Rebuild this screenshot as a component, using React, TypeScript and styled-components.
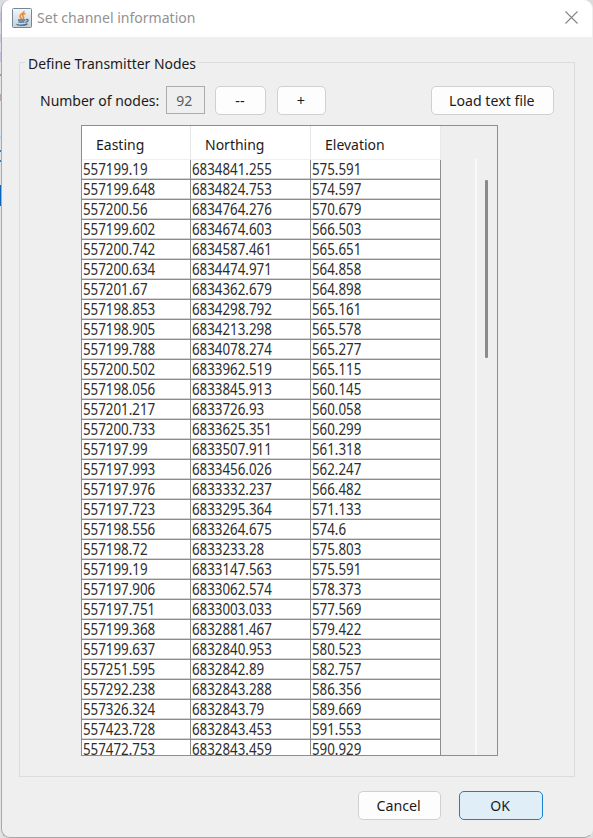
import React from "react";
import styled, { createGlobalStyle } from "styled-components";

const Global = createGlobalStyle`
  *, *::before, *::after { box-sizing: border-box; }
  body { margin: 0; background: #e4e4e6; overflow: hidden; }
`;

const Backdrop = styled.div`
  width: 593px;
  height: 838px;
  padding: 0 0 0 1px;
  background:
    linear-gradient(
      #dcdce4 0 12px, #c9c4dc 12px 22px, #dcdce4 22px 34px, #cfc0d4 34px 42px,
      #dcdce4 42px 52px, #c9c0dc 52px 62px, #e3e3e3 62px 74px, #9a9a9a 74px 76px,
      #e3e3e3 76px 94px, #b8aaa4 94px 101px, #e3e3e3 101px 136px, #b9dcf2 136px 139px,
      #e3e3e3 139px 150px, #3a80c0 150px 152px, #e3e3e3 152px 160px, #3a80c0 160px 162px,
      #e3e3e3 162px 185px, #0a64c0 185px 206px, #e3e3e3 206px
    ) left / 2px 100% no-repeat,
    #dcdcdc;
  font-family: "Noto Sans", sans-serif;
  font-size: 14.5px;
  color: #1b1b1b;
`;

const Window = styled.div`
  width: 592px;
  height: 838px;
  display: flex;
  flex-direction: column;
  background: #efefef;
  border: 1px solid #a9a9a9;
  border-top: 0;
  border-right-color: #efefef;
  border-radius: 9px;
  overflow: hidden;
`;

const TitleBar = styled.header`
  height: 37px;
  flex: none;
  display: flex;
  align-items: center;
  padding: 0 14px 2px 10px;
  background: #fff;
`;

const Title = styled.h1`
  flex: 1;
  margin: 0 0 1px 5px;
  font-size: 15px;
  font-weight: 400;
  line-height: 20px;
  color: #929292;
`;

const Fit = styled.span<{ $x?: number; $origin?: string }>`
  display: inline-block;
  white-space: nowrap;
  transform: scaleX(${(p) => p.$x ?? 0.965});
  transform-origin: ${(p) => p.$origin ?? "left"} center;
`;

const Group = styled.fieldset`
  width: 556px;
  height: 723px;
  margin: 17px 0 0 17px;
  padding: 0;
  border: 1px solid #dcdcdc;
  min-width: 0;
`;

const Legend = styled.legend`
  width: 174px;
  height: 17px;
  margin-left: 5px;
  padding: 0 0 0 3px;
  line-height: 19px;
`;

const Toolbar = styled.div`
  display: flex;
  align-items: center;
  height: 30px;
  margin: 14px 20px 0 19px;
`;

const CountLabel = styled.label`
  width: 127px;
  padding-left: 0.5px;
`;

const CountField = styled.output`
  width: 39px;
  height: 28px;
  border: 1px solid #aaaaaf;
  color: #5a5a5a;
  text-align: center;
  line-height: 26px;
  padding-right: 2px;
`;

const Button = styled.button<{ $w: number; $primary?: boolean }>`
  width: ${(p) => p.$w}px;
  height: 29px;
  padding: 0 1px 1px 0;
  border: 1px solid ${(p) => (p.$primary ? "#1a80d2" : "#d0d0d0")};
  border-radius: 5px;
  background: ${(p) => (p.$primary ? "#e0eef8" : "#fdfdfd")};
  font: inherit;
  color: inherit;
`;

const StepButtons = styled.div`
  display: flex;
  gap: 11px;
  margin-left: 10px;
  flex: 1;
`;

const TableFrame = styled.div`
  width: 417px;
  height: 631px;
  margin: 10px 0 0 61px;
  border: 1px solid #8b8e98;
  display: flex;
  overflow: hidden;
`;

const Table = styled.div`
  width: 359px;
  flex: none;
`;

const HeaderRow = styled.div`
  display: grid;
  grid-template-columns: 109px 120px 130px;
  height: 34px;
  background: #fff;
  border-bottom: 1px solid #f0f0f0;
`;

const HeaderCell = styled.div`
  padding-left: 13.5px;
  border-right: 1px solid #e8e8e8;
  line-height: 36px;
`;

const Row = styled.div`
  display: grid;
  grid-template-columns: 109px 120px 130px;
  height: 20px;
  width: 359px;
  background: #fff;
`;

const Cell = styled.div`
  padding-left: 0.8px;
  border-right: 1px solid #8c8c8c;
  border-bottom: 1px solid #8c8c8c;
  box-shadow: inset 0 -1px #d4d4d4;
  line-height: 19px;
  color: #2c2c2c;
  font-size: 15.5px;
`;

const ScrollTrack = styled.div`
  width: 21px;
  margin: 33px 0 0 34px;
  border-left: 2px solid #fafafa;
  padding: 21px 0 0 8px;
`;

const ScrollThumb = styled.div`
  width: 3px;
  height: 178px;
  border-radius: 1px;
  background: #8b8b8b;
`;

const Actions = styled.footer`
  display: flex;
  justify-content: flex-end;
  gap: 18px;
  margin: 14px 49px 0 0;
`;

const nodes = `557199.19 6834841.255 575.591
557199.648 6834824.753 574.597
557200.56 6834764.276 570.679
557199.602 6834674.603 566.503
557200.742 6834587.461 565.651
557200.634 6834474.971 564.858
557201.67 6834362.679 564.898
557198.853 6834298.792 565.161
557198.905 6834213.298 565.578
557199.788 6834078.274 565.277
557200.502 6833962.519 565.115
557198.056 6833845.913 560.145
557201.217 6833726.93 560.058
557200.733 6833625.351 560.299
557197.99 6833507.911 561.318
557197.993 6833456.026 562.247
557197.976 6833332.237 566.482
557197.723 6833295.364 571.133
557198.556 6833264.675 574.6
557198.72 6833233.28 575.803
557199.19 6833147.563 575.591
557197.906 6833062.574 578.373
557197.751 6833003.033 577.569
557199.368 6832881.467 579.422
557199.637 6832840.953 580.523
557251.595 6832842.89 582.757
557292.238 6832843.288 586.356
557326.324 6832843.79 589.669
557423.728 6832843.453 591.553
557472.753 6832843.459 590.929`
  .split("\n")
  .map((line) => line.split(" "));

function JavaIcon() {
  return (
    <svg width="20" height="20" viewBox="0 0 20 20" fill="none">
      <defs>
        <linearGradient id="tile" x1="0" y1="0" x2="0" y2="1">
          <stop offset="0" stopColor="#f4f7f9" />
          <stop offset="1" stopColor="#c3ced8" />
        </linearGradient>
      </defs>
      <rect x="0.5" y="0.5" width="19" height="19" rx="1" fill="url(#tile)" stroke="#71889c" />
      <path d="M12 3C12.500 5.500 7.500 6 8 8.500C8.200 9.700 9.500 10 9.500 11M13.500 5.500C10.500 6.500 10 7.500 11.500 9C12 9.800 11.500 10.300 11 11" stroke="#ed8a35" strokeWidth="1.600" />
      <path d="M6 12H13.500M6.500 14H12.500M4.500 16.300C8 17.500 12 17.500 15.500 16M14 11.500C17.300 11 16.500 14 13.500 14.300" stroke="#4f7190" strokeWidth="1.400" />
    </svg>
  );
}

function CloseIcon() {
  return (
    <svg width="13" height="13" viewBox="0 0 13 13">
      <path d="M0.500 0.500L12.500 12.500M12.500 0.500L0.500 12.500" stroke="#858585" strokeWidth="1.100" />
    </svg>
  );
}

export default function App() {
  return (
    <Backdrop>
      <Global />
      <Window>
        <TitleBar>
          <JavaIcon />
          <Title><Fit $x={0.936}>Set channel information</Fit></Title>
          <CloseIcon />
        </TitleBar>
        <Group>
          <Legend><Fit $x={0.96}>Define Transmitter Nodes</Fit></Legend>
          <Toolbar>
            <CountLabel><Fit>Number of nodes:</Fit></CountLabel>
            <CountField><Fit $origin="center">92</Fit></CountField>
            <StepButtons>
              <Button $w={51}>--</Button>
              <Button $w={49}>+</Button>
            </StepButtons>
            <Button $w={123}><Fit $origin="center" $x={0.975}>Load text file</Fit></Button>
          </Toolbar>
          <TableFrame>
            <Table>
              <HeaderRow>
                {["Easting", "Northing", "Elevation"].map((name) => (
                  <HeaderCell key={name}><Fit>{name}</Fit></HeaderCell>
                ))}
              </HeaderRow>
              {nodes.map((node, index) => (
                <Row key={index}>
                  {node.map((value, column) => (
                    <Cell key={column}><Fit $x={0.86}>{value}</Fit></Cell>
                  ))}
                </Row>
              ))}
            </Table>
            <ScrollTrack><ScrollThumb /></ScrollTrack>
          </TableFrame>
        </Group>
        <Actions>
          <Button $w={83}><Fit $origin="center" $x={0.98}>Cancel</Fit></Button>
          <Button $w={84} $primary><Fit $origin="center">OK</Fit></Button>
        </Actions>
      </Window>
    </Backdrop>
  );
}
